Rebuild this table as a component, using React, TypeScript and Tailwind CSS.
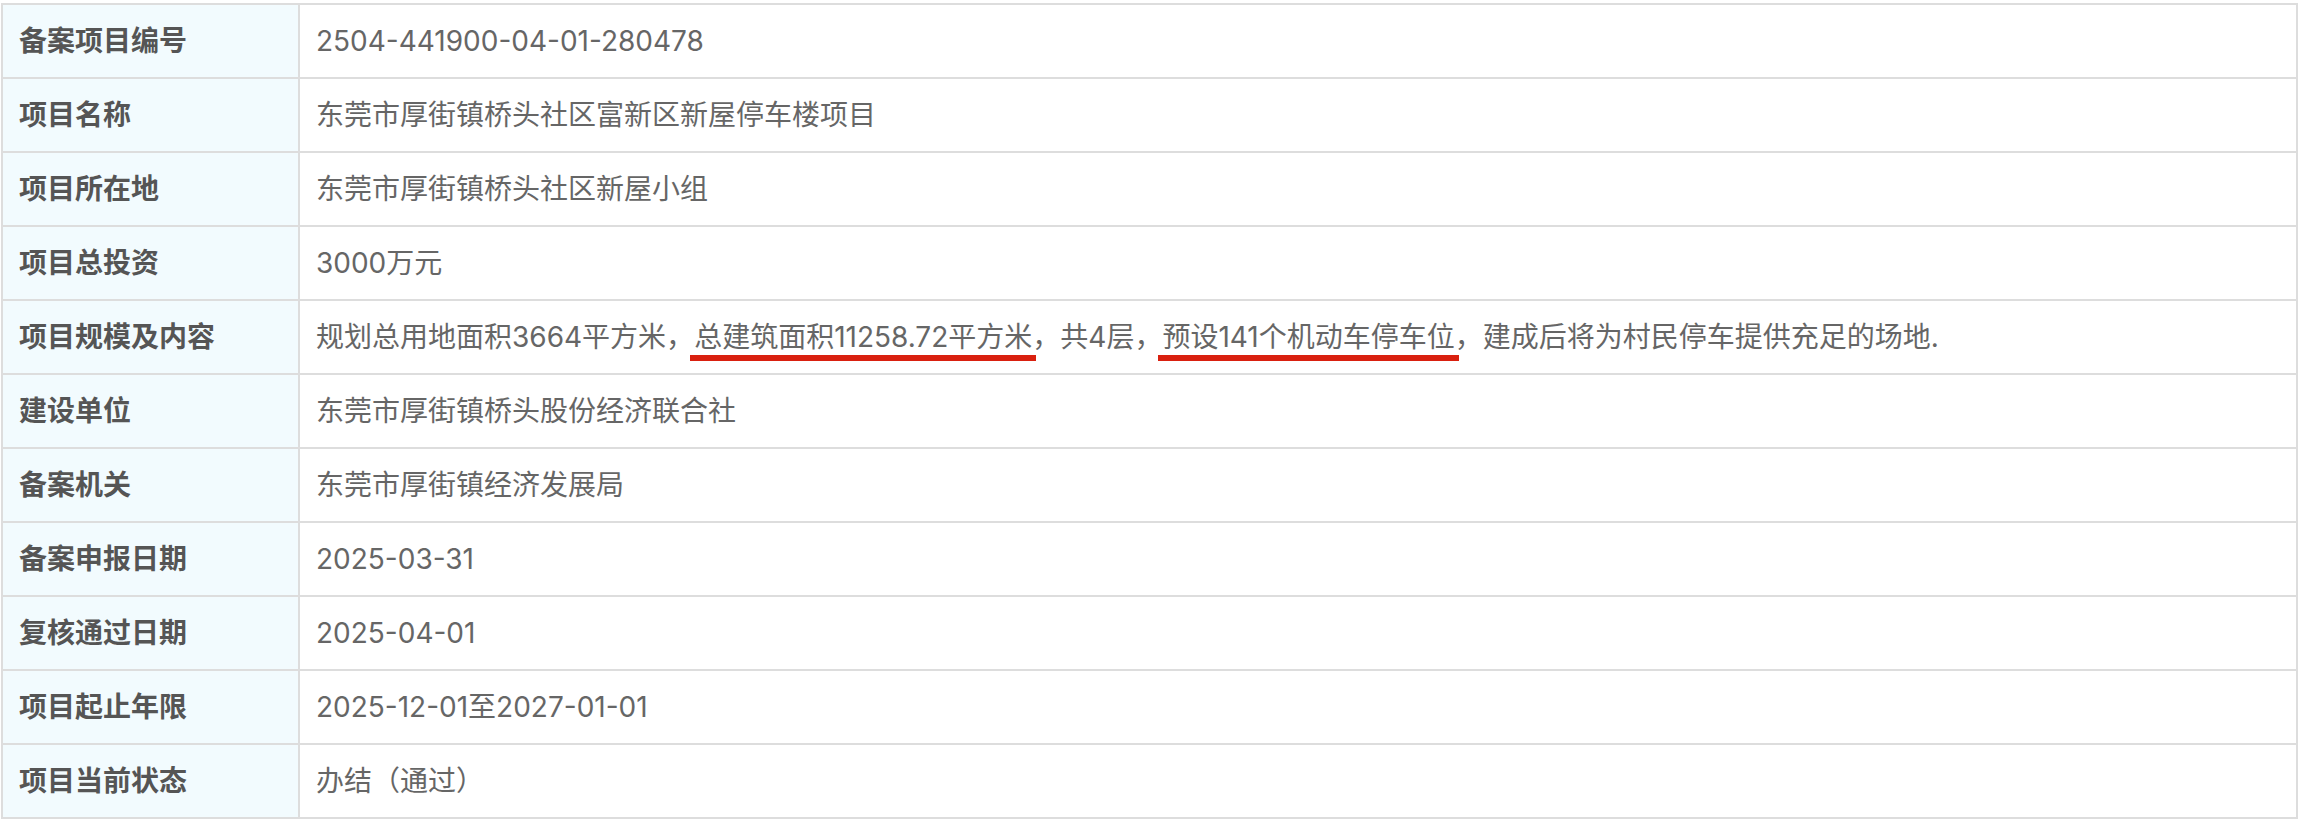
const rows: { label: string; value: React.ReactNode }[] = [
  { label: "备案项目编号", value: "2504-441900-04-01-280478" },
  { label: "项目名称", value: "东莞市厚街镇桥头社区富新区新屋停车楼项目" },
  { label: "项目所在地", value: "东莞市厚街镇桥头社区新屋小组" },
  { label: "项目总投资", value: "3000万元" },
  {
    label: "项目规模及内容",
    value: (
      <>
        规划总用地面积3664平方米，
        <Mark>总建筑面积11258.72平方米</Mark>
        ，共4层，
        <Mark>预设141个机动车停车位</Mark>
        ，建成后将为村民停车提供充足的场地.
      </>
    ),
  },
  { label: "建设单位", value: "东莞市厚街镇桥头股份经济联合社" },
  { label: "备案机关", value: "东莞市厚街镇经济发展局" },
  { label: "备案申报日期", value: "2025-03-31" },
  { label: "复核通过日期", value: "2025-04-01" },
  { label: "项目起止年限", value: "2025-12-01至2027-01-01" },
  { label: "项目当前状态", value: "办结（通过）" },
];

function Mark({ children }: { children: React.ReactNode }) {
  return (
    <span className="border-b-[6px] border-[#d9200f] px-[4px] -mx-[4px] pb-[1px]">
      {children}
    </span>
  );
}

export default function App() {
  return (
    <div className="w-[2300px] h-[822px] bg-white pt-[3px] pl-[1px] font-['Inter','Noto_Sans_CJK_SC',sans-serif]">
      <div className="w-[2297px] border-2 border-[#dddddd]">
        {rows.map((r, i) => (
          <div
            key={r.label}
            className={
              i > 0
                ? "flex h-[74px] border-t-2 border-[#dddddd]"
                : "flex h-[72px]"
            }
          >
            <div className="w-[297px] shrink-0 bg-[#f2fbfe] border-r-2 border-[#dddddd] flex items-center px-4 text-[28px] font-bold text-[#555555]">
              {r.label}
            </div>
            <div className="flex-1 flex items-center px-4 text-[28px] text-[#666666]">
              <span>{r.value}</span>
            </div>
          </div>
        ))}
      </div>
    </div>
  );
}
